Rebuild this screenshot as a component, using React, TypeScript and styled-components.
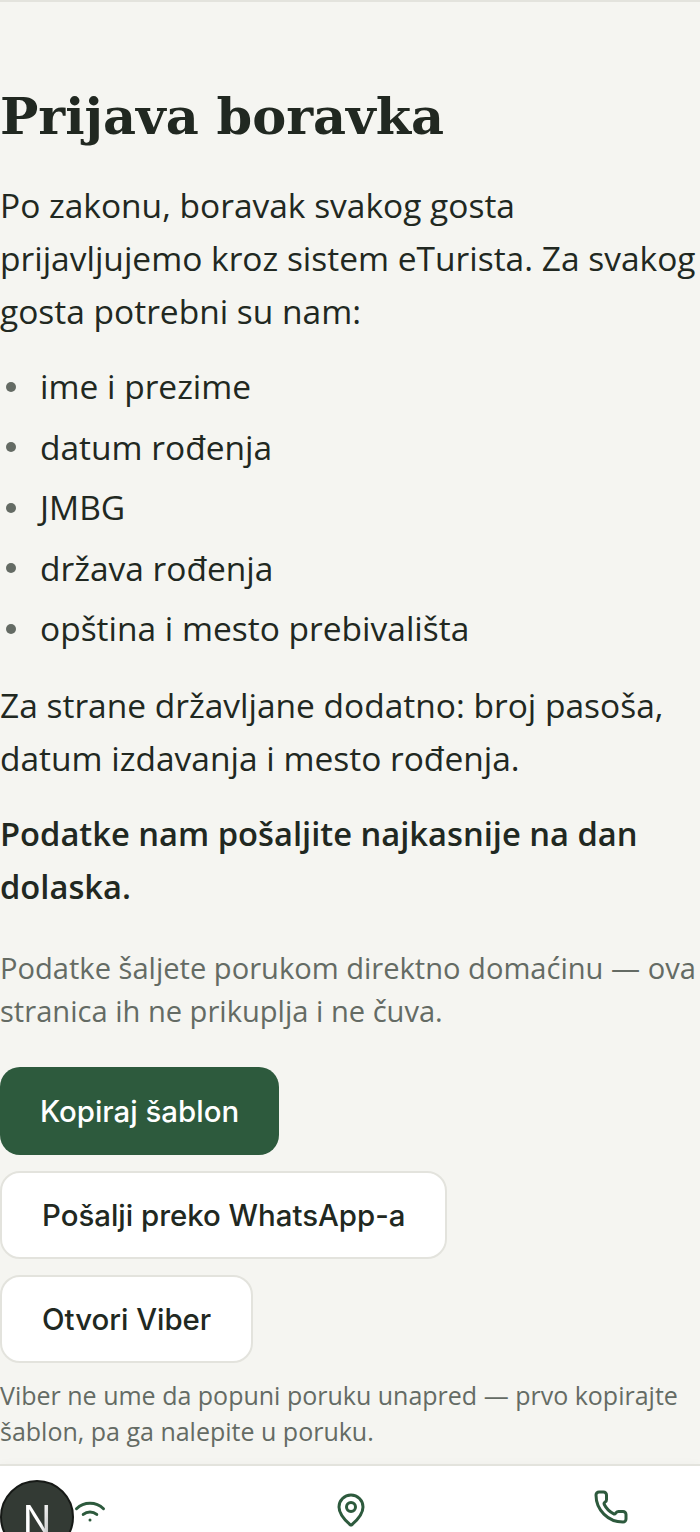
import React from 'react'
import styled, { createGlobalStyle } from 'styled-components'
import { MapPin, Phone } from 'lucide-react'

const GlobalStyle = createGlobalStyle`
  html, body {
    margin: 0;
    padding: 0;
    background: #f5f5f1;
  }
`

const Page = styled.div`
  width: 700px;
  height: 1532px;
  overflow: hidden;
  display: flex;
  flex-direction: column;
  background: #f5f5f1;
  border-top: 2px solid #e3e3dd;
  box-sizing: border-box;
  color: #212821;
  font-family: "Open Sans", "Liberation Sans", sans-serif;
`

const Main = styled.main`
  height: 1462px;
  flex: none;
  box-sizing: border-box;
  padding-top: 84px;
`

const Title = styled.h1`
  margin: 0 0 33px;
  font-family: "DejaVu Serif", serif;
  font-weight: 700;
  font-size: 51px;
  line-height: 60px;
`

const Para = styled.p`
  margin: 0 0 22px;
  font-size: 33.5px;
  line-height: 53px;
`

const Strong = styled(Para)`
  margin-bottom: 34px;
  font-size: 32.7px;
  font-weight: 600;
`

const Note = styled.p`
  margin: 0 0 34px;
  font-size: 29.1px;
  line-height: 43px;
  color: #646b64;
`

const List = styled.ul`
  margin: 4px 0 24px;
  padding: 0 0 0 6px;
  list-style: none;
  font-size: 33.5px;
  line-height: 53px;
`

const Item = styled.li`
  display: flex;
  align-items: center;
  gap: 24px;
  margin-bottom: 7.5px;
  &::before {
    content: "";
    width: 10px;
    height: 10px;
    border-radius: 50%;
    background: #646b64;
  }
`

const Actions = styled.div`
  display: flex;
  flex-direction: column;
  align-items: flex-start;
  gap: 16px;
`

const Button = styled.button<{ $primary?: boolean }>`
  height: 88px;
  box-sizing: border-box;
  padding: 0 40px;
  border-radius: 20px;
  border: ${p => (p.$primary ? 'none' : '2px solid #e3e3dd')};
  background: ${p => (p.$primary ? '#2d5a3d' : '#ffffff')};
  color: ${p => (p.$primary ? '#ffffff' : '#212821')};
  font-family: "Inter", sans-serif;
  font-size: 29.4px;
  font-weight: 500;
`

const Hint = styled.p`
  margin: 14px 0 0;
  font-size: 25px;
  line-height: 36px;
  color: #646b64;
`

const Nav = styled.nav`
  position: relative;
  flex: 1;
  display: flex;
  justify-content: space-between;
  padding: 0 71px 0 72px;
  background: #ffffff;
  border-top: 2px solid #e3e3dd;
  box-shadow: 0 -2px 8px rgba(0, 0, 0, 0.02);
  color: #2d5a3d;
`

const NavItem = styled.div<{ $top: number }>`
  padding-top: ${p => p.$top}px;
`

const DevBadge = styled.div`
  position: absolute;
  left: 0;
  top: 14px;
  width: 74px;
  height: 74px;
  border-radius: 50%;
  background: #333a34;
  border: 2px solid #161916;
  box-sizing: border-box;
`

const BadgeLetter = styled.span`
  display: block;
  font-family: "Inter", sans-serif;
  font-weight: 400;
  font-size: 38px;
  line-height: 74px;
  text-align: center;
  background: linear-gradient(100deg, #ffffff 55%, #777777 80%);
  -webkit-background-clip: text;
  background-clip: text;
  color: transparent;
`

const WifiIcon = () => (
  <svg width="36" height="36" viewBox="0 0 24 24" fill="none" stroke="currentColor" strokeWidth="2" strokeLinecap="round" strokeLinejoin="round">
    <path d="M12 20h.01" />
    <path d="M7.5 16.3a7 7 0 0 1 9 0" />
    <path d="M3 12.5a13 13 0 0 1 18 0" />
  </svg>
)

const App: React.FC = () => {
  return (
    <Page>
      <GlobalStyle />
      <Main>
        <Title>Prijava boravka</Title>
        <Para>Po zakonu, boravak svakog gosta prijavljujemo kroz sistem eTurista. Za svakog gosta potrebni su nam:</Para>
        <List>
          <Item>ime i prezime</Item>
          <Item>datum rođenja</Item>
          <Item>JMBG</Item>
          <Item>država rođenja</Item>
          <Item>opština i mesto prebivališta</Item>
        </List>
        <Para>Za strane državljane dodatno: broj pasoša, datum izdavanja i mesto rođenja.</Para>
        <Strong>Podatke nam pošaljite najkasnije na dan dolaska.</Strong>
        <Note>Podatke šaljete porukom direktno domaćinu — ova stranica ih ne prikuplja i ne čuva.</Note>
        <Actions>
          <Button $primary>Kopiraj šablon</Button>
          <Button>Pošalji preko WhatsApp-a</Button>
          <Button>Otvori Viber</Button>
        </Actions>
        <Hint>Viber ne ume da popuni poruku unapred — prvo kopirajte šablon, pa ga nalepite u poruku.</Hint>
      </Main>
      <Nav>
        <DevBadge><BadgeLetter>N</BadgeLetter></DevBadge>
        <NavItem $top={24}><WifiIcon /></NavItem>
        <NavItem $top={26}><MapPin size={36} /></NavItem>
        <NavItem $top={23}><Phone size={36} /></NavItem>
      </Nav>
    </Page>
  )
}

export default App
